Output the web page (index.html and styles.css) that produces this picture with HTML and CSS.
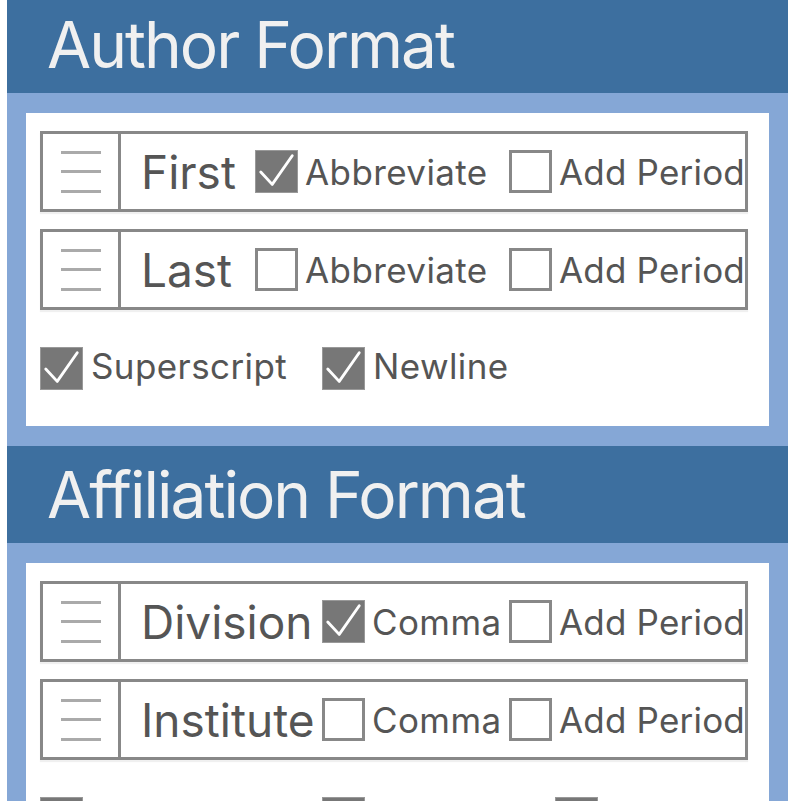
FILE: index.html
```html
<!DOCTYPE html>
<html lang="en">
<head>
<meta charset="utf-8">
<title>Format</title>
<link rel="stylesheet" href="styles.css">
</head>
<body>
<div class="page">
  <section class="panel">
    <h2 class="panel-title">Author Format</h2>
    <div class="panel-body">
      <div class="card">
        <div class="rows">
          <div class="row">
            <div class="handle"><span></span><span></span><span></span></div>
            <div class="row-main">
              <span class="label label-author">First</span>
              <label class="opt"><span class="box checked"><svg viewBox="0 0 43 43"><polyline points="5,22 17,35 38,5"/></svg></span><span class="opt-text">Abbreviate</span></label>
              <label class="opt opt-end"><span class="box"></span><span class="opt-text">Add Period</span></label>
            </div>
          </div>
          <div class="row">
            <div class="handle"><span></span><span></span><span></span></div>
            <div class="row-main">
              <span class="label label-author">Last</span>
              <label class="opt"><span class="box"></span><span class="opt-text">Abbreviate</span></label>
              <label class="opt opt-end"><span class="box"></span><span class="opt-text">Add Period</span></label>
            </div>
          </div>
        </div>
        <div class="footer">
          <label class="opt"><span class="box checked"><svg viewBox="0 0 43 43"><polyline points="5,22 17,35 38,5"/></svg></span><span class="opt-text">Superscript</span></label>
          <label class="opt"><span class="box checked"><svg viewBox="0 0 43 43"><polyline points="5,22 17,35 38,5"/></svg></span><span class="opt-text">Newline</span></label>
        </div>
      </div>
    </div>
  </section>
  <section class="panel">
    <h2 class="panel-title">Affiliation Format</h2>
    <div class="panel-body">
      <div class="card">
        <div class="rows">
          <div class="row">
            <div class="handle"><span></span><span></span><span></span></div>
            <div class="row-main">
              <span class="label label-affil">Division</span>
              <label class="opt"><span class="box checked"><svg viewBox="0 0 43 43"><polyline points="5,22 17,35 38,5"/></svg></span><span class="opt-text">Comma</span></label>
              <label class="opt opt-end"><span class="box"></span><span class="opt-text">Add Period</span></label>
            </div>
          </div>
          <div class="row">
            <div class="handle"><span></span><span></span><span></span></div>
            <div class="row-main">
              <span class="label label-affil">Institute</span>
              <label class="opt"><span class="box"></span><span class="opt-text">Comma</span></label>
              <label class="opt opt-end"><span class="box"></span><span class="opt-text">Add Period</span></label>
            </div>
          </div>
        </div>
        <div class="footer">
          <label class="opt"><span class="box checked"><svg viewBox="0 0 43 43"><polyline points="5,22 17,35 38,5"/></svg></span><span class="opt-text">Superscript</span></label>
          <label class="opt"><span class="box checked"><svg viewBox="0 0 43 43"><polyline points="5,22 17,35 38,5"/></svg></span><span class="opt-text">Newline</span></label>
          <label class="opt"><span class="box checked"><svg viewBox="0 0 43 43"><polyline points="5,22 17,35 38,5"/></svg></span><span class="opt-text">Semicolon</span></label>
        </div>
      </div>
    </div>
  </section>
</div>
</body>
</html>
```

FILE: styles.css
```css
html, body {
  margin: 0;
  padding: 0;
  background: #ffffff;
}

body {
  font-family: Inter, "Noto Sans", "Liberation Sans", sans-serif;
  color: #555555;
}

.page {
  width: 781px;
  margin: -4px 0 0 7px;
}

.panel-title {
  margin: 0;
  height: 97px;
  display: flex;
  align-items: center;
  padding-left: 40px;
  background: #3d6f9f;
  color: #f0f0f0;
  font-size: 64px;
  font-weight: 400;
  letter-spacing: -2px;
}

.panel-body {
  background: #85a7d6;
  padding: 20px 19px;
}

.card {
  background: #ffffff;
  padding: 18px 21px 36px 14px;
}

.rows {
  display: flex;
  flex-direction: column;
  gap: 17px;
}

.row {
  display: flex;
  height: 81px;
  box-sizing: border-box;
  border: 3px solid #888888;
  box-shadow: 0 2px 1px rgba(0, 0, 0, 0.06);
}

.handle {
  width: 75px;
  flex-shrink: 0;
  border-right: 3px solid #888888;
  display: flex;
  flex-direction: column;
  align-items: center;
  justify-content: center;
  gap: 16.5px;
}

.handle span {
  display: block;
  width: 40px;
  height: 3px;
  background: #aaaaaa;
}

.row-main {
  flex: 1;
  display: flex;
  align-items: center;
  padding-left: 20px;
  min-width: 0;
}

.label {
  flex-shrink: 0;
  font-size: 46px;
  white-space: nowrap;
  color: #555555;
}

.label-author {
  width: 114px;
}

.label-affil {
  width: 181px;
}

.opt {
  display: flex;
  align-items: center;
  gap: 7px;
  white-space: nowrap;
}

.opt-end {
  margin-left: auto;
}

.opt-text {
  font-size: 35px;
  color: #555555;
  letter-spacing: 0.4px;
}

.opt-end .opt-text {
  letter-spacing: 0.2px;
}

.box {
  width: 43px;
  height: 43px;
  box-sizing: border-box;
  border: 3px solid #888888;
  background: #ffffff;
  flex-shrink: 0;
  display: block;
}

.box.checked {
  border: 1px solid #999999;
  background: #777777;
}

.box svg {
  display: block;
  width: 41px;
  height: 41px;
}

.box polyline {
  fill: none;
  stroke: #ffffff;
  stroke-width: 3;
  stroke-linecap: round;
  stroke-linejoin: round;
}

.footer {
  margin-top: 37px;
  display: grid;
  grid-template-columns: 282px 233px auto;
  align-items: center;
}

.footer .opt {
  gap: 8px;
}

.footer .opt-text {
  line-height: 1;
  padding-bottom: 4px;
}
```
